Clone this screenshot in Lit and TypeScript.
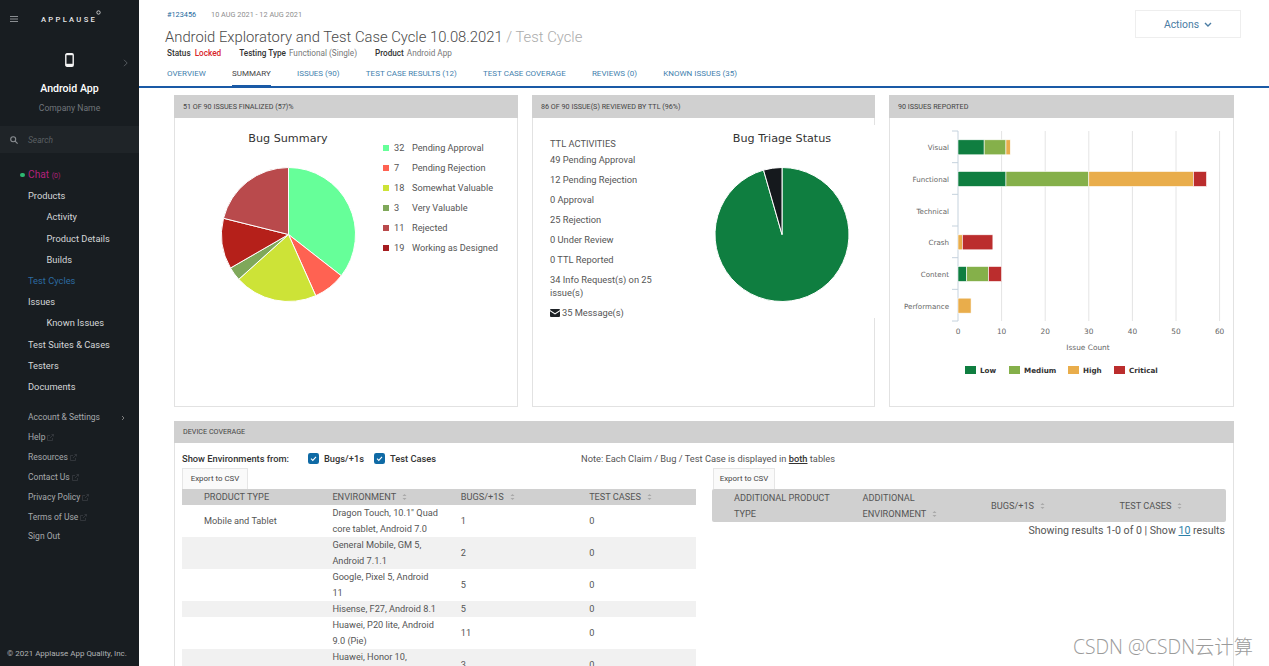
import { LitElement, html, css, svg } from "lit";
import { customElement } from "lit/decorators.js";

const polar = (cx: number, cy: number, r: number, deg: number) => {
  const a = ((deg - 90) * Math.PI) / 180;
  return [cx + r * Math.cos(a), cy + r * Math.sin(a)];
};

function pie(cx: number, cy: number, r: number, slices: { v: number; c: string }[]) {
  const total = slices.reduce((s, x) => s + x.v, 0);
  let start = 0;
  return slices.map((s) => {
    const end = start + (s.v / total) * 360;
    const [x1, y1] = polar(cx, cy, r, start);
    const [x2, y2] = polar(cx, cy, r, end);
    const large = end - start > 180 ? 1 : 0;
    start = end;
    return svg`<path d="M${cx} ${cy}L${x1} ${y1}A${r} ${r} 0 ${large} 1 ${x2} ${y2}Z" fill=${s.c} stroke="#fff" stroke-width="1" stroke-linejoin="round"/>`;
  });
}

const LEGEND = [
  { n: 32, l: "Pending Approval", c: "#66ff99" },
  { n: 7, l: "Pending Rejection", c: "#ff6252" },
  { n: 18, l: "Somewhat Valuable", c: "#cde337" },
  { n: 3, l: "Very Valuable", c: "#7fa85a" },
  { n: 11, l: "Rejected", c: "#b94a4c" },
  { n: 19, l: "Working as Designed", c: "#a51d20" },
];
const PIE1 = [
  { v: 32, c: "#66ff99" },
  { v: 7, c: "#ff6252" },
  { v: 18, c: "#cde337" },
  { v: 3, c: "#7fa85a" },
  { v: 11, c: "#b5201a" },
  { v: 19, c: "#b94a4c" },
];
const PIE2 = [
  { v: 86, c: "#0f7e40" },
  { v: 4, c: "#15191d" },
];
const SEV = { low: "#0f7e40", med: "#85b04a", high: "#e9ad4b", crit: "#bb2d2d" };
const BARS: { name: string; parts: [number, string][] }[] = [
  { name: "Visual", parts: [[6, SEV.low], [5, SEV.med], [1, SEV.high]] },
  { name: "Functional", parts: [[11, SEV.low], [19, SEV.med], [24, SEV.high], [3, SEV.crit]] },
  { name: "Technical", parts: [] },
  { name: "Crash", parts: [[1, SEV.high], [7, SEV.crit]] },
  { name: "Content", parts: [[2, SEV.low], [5, SEV.med], [3, SEV.crit]] },
  { name: "Performance", parts: [[3, SEV.high]] },
];
const ROWS = [
  ["Mobile and Tablet", "Dragon Touch, 10.1\" Quad core tablet, Android 7.0", "1", "0"],
  ["", "General Mobile, GM 5, Android 7.1.1", "2", "0"],
  ["", "Google, Pixel 5, Android 11", "5", "0"],
  ["", "Hisense, F27, Android 8.1", "5", "0"],
  ["", "Huawei, P20 lite, Android 9.0 (Pie)", "11", "0"],
  ["", "Huawei, Honor 10, Android 9.0 (Pie)", "3", "0"],
];

const sortIcon = html`<svg class="sort" width="5" height="8" viewBox="0 0 5 8"><path d="M2.5 1L4.5 3H.5zM2.5 7L.5 5h4z" fill="#a9a9a9"/></svg>`;
const extIcon = html`<svg class="ext" width="7" height="7" viewBox="0 0 7 7" fill="none" stroke="#3c4145" stroke-width=".7"><path d="M5.5 4v2.5h-5v-5H3M3 4l3.5-3.5M4.5.5h2v2"/></svg>`;

@customElement("app-root")
export class AppRoot extends LitElement {
  static styles = css`
    :host { display: block; height: 666px; overflow: hidden; font-family: Roboto, "Liberation Sans", sans-serif; color: #444; background: #fff; position: relative; }
    .app { display: flex; height: 666px; }
    .side { width: 139px; flex: none; background: #181d21; display: flex; flex-direction: column; color: #d8d8d8; }
    .brand { height: 126px; display: flex; flex-direction: column; position: relative; }
    .topline { display: flex; align-items: center; height: 38px; padding-left: 10px; }
    .logo { margin-left: 23px; font-size: 7.6px; font-weight: 500; letter-spacing: 2.3px; color: #e8e8e8; display: flex; }
    .logo svg { margin: -5px 0 0 -1px; }
    .phone { margin: 15px auto 0; display: block; }
    .chev { position: absolute; left: 123px; top: 59px; }
    .appname { text-align: center; font-size: 10.6px; font-weight: 500; color: #fff; margin-top: 15px; line-height: 14px; }
    .company { text-align: center; font-size: 8.6px; color: #70757a; margin-top: 5.5px; line-height: 12px; }
    .search { height: 27px; background: #1f2428; display: flex; align-items: center; padding-left: 10px; gap: 10px; font-size: 8.4px; font-style: italic; color: #5b6064; }
    .nav { padding-top: 11px; }
    .item { height: 21.2px; line-height: 21.2px; padding-left: 28px; font-size: 9.3px; color: #d4d6d8; white-space: nowrap; }
    .item.sub { padding-left: 46.5px; }
    .chat { color: #b5217c; font-size: 10.2px; position: relative; }
    .chat small { font-size: 7px; }
    .dot { position: absolute; left: 20px; top: 8.5px; width: 4.5px; height: 4.5px; border-radius: 50%; background: #2eb872; }
    .link { color: #2c6aa0; }
    .nav2 { margin-top: 11px; }
    .item2 { height: 19.9px; line-height: 19.9px; padding-left: 28px; font-size: 8.5px; color: #a6a9ac; display: flex; align-items: center; gap: 2px; position: relative; white-space: nowrap; }
    .item2 .arrow { position: absolute; left: 121px; top: 7px; }
    .copy { margin-top: auto; padding: 0 0 7px 7px; font-size: 7.97px; line-height: 10px; color: #b0b2b4; white-space: nowrap; }

    .main { flex: 1; min-width: 0; display: flex; flex-direction: column; }
    .head { height: 88px; flex: none; border-bottom: 2px solid #1a5aa6; box-sizing: border-box; padding: 10px 28px 0 28px; position: relative; }
    .crumbs { display: flex; gap: 15px; font-size: 7.3px; line-height: 10px; color: #8d8d8d; }
    .crumbs b { font-weight: 400; color: #1c6a9e; }
    h1 { margin: 6.5px 0 0 -2px; font-size: 14.8px; font-weight: 300; line-height: 20px; color: #4a4a4a; white-space: nowrap; }
    h1 span { color: #ababab; }
    .meta { display: flex; gap: 18px; margin-top: 1.5px; font-size: 8.2px; line-height: 11px; color: #777; }
    .meta b { font-weight: 500; color: #333; margin-right: 1px; }
    .meta .red { color: #d8232a; font-weight: 500; margin-left: 1px; }
    .tabs { display: flex; gap: 26.2px; margin-top: 7px; font-size: 8px; color: #3f7fae; }
    .tab { padding: 3px 0 6px; line-height: 10px; white-space: nowrap; }
    .tab.on { color: #444; border-bottom: 2px solid #1a5aa6; }
    .actions { position: absolute; right: 28px; top: 10px; width: 106px; height: 28px; box-sizing: border-box; border: 1px solid #eee; display: flex; align-items: center; justify-content: center; gap: 5px; font-size: 10.4px; color: #4a7ca3; }

    .content { flex: 1; min-height: 0; padding: 7px 35px 0; display: flex; flex-direction: column; gap: 14px; }
    .row { display: grid; grid-template-columns: 344px 343px 345px; column-gap: 14px; }
    .panel { border: 1px solid #e2e2e2; border-top: none; box-sizing: border-box; }
    .row .panel { height: 312px; display: flex; flex-direction: column; }
    .ph { height: 23px; margin: 0 -1px; background: #d0d0d0; font-size: 7.2px; line-height: 23px; padding-left: 9px; color: #444; white-space: nowrap; flex: none; }
    .pb { flex: 1; display: flex; min-height: 0; }
    .pie-svg { display: block; flex: none; }
    .legend { margin: 19.5px 0 0 8px; font-size: 9.2px; color: #555; }
    .leg { display: flex; align-items: center; height: 20px; white-space: nowrap; }
    .sw { width: 6px; height: 6px; margin-right: 5px; }
    .num { width: 18px; }
    .ttl { width: 150px; box-sizing: border-box; padding: 19px 12px 0 17px; font-size: 9.3px; color: #555; flex: none; }
    .ttl div { line-height: 13px; margin-bottom: 7px; }
    .ttl .cap { margin-bottom: 3px; }
    .mail { display: inline-block; vertical-align: -1px; margin-right: 2px; }
    .cover { position: relative; margin-right: -1px; background: #fff; height: 193px; flex: none; margin-top: 7px; }
    .dc { flex: 1; border-bottom: none; }
    .dc .ph { height: 22px; line-height: 22px; }
    .dcb { padding: 0 7px; }
    .filters { display: flex; align-items: center; height: 25px; box-sizing: border-box; padding-top: 5px; font-size: 9.3px; color: #444; }
    .filters b { font-weight: 500; color: #333; white-space: nowrap; }
    .fl { width: 126px; flex: none; }
    .ck { display: flex; align-items: center; gap: 5px; width: 66px; flex: none; }
    .note { margin-left: 141px; white-space: nowrap; color: #555; }
    .note b { text-decoration: underline; font-weight: 500; color: #333; }
    .tables { display: flex; gap: 16.5px; }
    .tw { width: 513.5px; flex: none; }
    .tw.r { width: 514px; }
    .export { display: block; width: 66px; height: 21px; box-sizing: border-box; border: 1px solid #e6e6e6; border-bottom: none; background: #fafafa; text-align: center; font-size: 7.9px; line-height: 20px; color: #444; }
    .tw.r .export { width: 62px; margin-left: 1px; }
    table { width: 100%; border-collapse: collapse; table-layout: fixed; font-size: 9.2px; color: #555; }
    th { background: #d0d0d0; font-weight: 400; text-align: left; padding: 0 0 0 22px; line-height: 16px; height: 16px; color: #555; white-space: normal; }
    td { padding: 0 0 0 22px; line-height: 16px; vertical-align: middle; }
    tbody tr:nth-child(even) td { background: #f1f1f1; }
    .sort { margin-left: 6px; vertical-align: -1px; }
    .r table { border-radius: 2px; overflow: hidden; }
    .r th { padding-top: 0.5px; padding-bottom: 0.5px; }
    .results { text-align: right; font-size: 10.6px; line-height: 18px; color: #555; margin-right: 1px; }
    .results u { color: #2c7fa8; }
    .mark { position: absolute; left: 1073px; top: 635px; font-size: 19.3px; line-height: 24px; color: #9b9b9b; font-family: "Open Sans", "Noto Sans CJK SC", sans-serif; white-space: nowrap; font-weight: 300; }
    text { font-family: "DejaVu Sans", sans-serif; }
  `;

  barChart() {
    const x0 = 68, sc = 4.36, top = 13, step = 31.67;
    return html`<svg width="343" height="288" viewBox="0 0 343 288">
      ${[10, 20, 30, 40, 50, 60].map((v) => svg`<line x1=${x0 + v * sc} x2=${x0 + v * sc} y1=${top} y2=${top + 190} stroke="#e4e4e4"/>`)}
      <line x1=${x0} x2=${x0} y1=${top} y2=${top + 190} stroke="#c5d2dd"/>
      ${[0, 1, 2, 3, 4, 5, 6].map((i) => svg`<line x1=${x0 - 6} x2=${x0} y1=${top + i * step} y2=${top + i * step} stroke="#c5d2dd"/>`)}
      ${BARS.map((b, i) => {
        let acc = 0;
        const y = top + i * step + 8.8;
        return svg`<text x=${x0 - 9} y=${y + 10.5} text-anchor="end" font-size="7.1" fill="#666">${b.name}</text>
        ${b.parts.map(([v, c]) => {
          const r = svg`<rect x=${x0 + acc * sc} y=${y} width=${v * sc} height="15" fill=${c} stroke="#fff" stroke-width=".6"/>`;
          acc += v;
          return r;
        })}`;
      })}
      ${[0, 10, 20, 30, 40, 50, 60].map((v) => svg`<text x=${x0 + v * sc} y="216" text-anchor="middle" font-size="7.4" fill="#666">${v}</text>`)}
      <text x=${x0 + 130} y="232" text-anchor="middle" font-size="7.4" fill="#666">Issue Count</text>
      ${[
        [75, "Low", SEV.low],
        [119, "Medium", SEV.med],
        [178, "High", SEV.high],
        [224, "Critical", SEV.crit],
      ].map(([x, l, c]) => svg`<rect x=${x} y="248" width="11" height="8" fill=${c as string}/>
        <text x=${(x as number) + 15} y="255" font-size="7.2" font-weight="700" fill="#333">${l}</text>`)}
    </svg>`;
  }

  render() {
    const check = (label: string) => html`<span class="ck"><svg width="11" height="11" viewBox="0 0 11 11"><rect width="11" height="11" rx="2.2" fill="#0f6aa5"/><path d="M3 5.6l1.8 1.8L8 3.9" fill="none" stroke="#fff" stroke-width="1.1"/></svg><b>${label}</b></span>`;
    return html`<div class="app">
      <aside class="side">
        <div class="brand">
          <div class="topline">
            <svg width="8" height="6" viewBox="0 0 8 6" stroke="#8a8e92" stroke-width="1"><path d="M0 .5h8M0 3h8M0 5.500h8"/></svg>
            <span class="logo">APPLAUSE<svg width="5" height="5" viewBox="0 0 5 5"><circle cx="2.500" cy="2.500" r="1.700" fill="none" stroke="#e8e8e8" stroke-width=".8"/></svg></span>
          </div>
          <svg class="phone" width="9" height="14" viewBox="0 0 9 14"><rect x=".8" y=".8" width="7.400" height="12.400" rx="1.200" fill="none" stroke="#f4f4f4" stroke-width="1.400"/><rect x="1" y="10.800" width="7" height="2.200" fill="#f4f4f4"/><rect x="1" y="1" width="7" height="1.200" fill="#f4f4f4"/></svg>
          <svg class="chev" width="5" height="8" viewBox="0 0 5 8" fill="none" stroke="#565b5f" stroke-width="1"><path d="M1 .8L4.200 4 1 7.200"/></svg>
          <div class="appname">Android App</div>
          <div class="company">Company Name</div>
        </div>
        <div class="search">
          <svg width="8" height="8" viewBox="0 0 8 8" fill="none" stroke="#8a8e92" stroke-width="1.100"><circle cx="3.200" cy="3.200" r="2.500"/><path d="M5.100 5.100L7.600 7.600"/></svg>
          <span>Search</span>
        </div>
        <nav class="nav">
          <div class="item chat"><span class="dot"></span>Chat <small>(0)</small></div>
          <div class="item">Products</div>
          <div class="item sub">Activity</div>
          <div class="item sub">Product Details</div>
          <div class="item sub">Builds</div>
          <div class="item link">Test Cycles</div>
          <div class="item">Issues</div>
          <div class="item sub">Known Issues</div>
          <div class="item">Test Suites &amp; Cases</div>
          <div class="item">Testers</div>
          <div class="item">Documents</div>
        </nav>
        <nav class="nav2">
          <div class="item2">Account &amp; Settings<svg class="arrow" width="4" height="6" viewBox="0 0 4 6" fill="none" stroke="#888" stroke-width=".9"><path d="M1 1l2 2-2 2"/></svg></div>
          <div class="item2">Help ${extIcon}</div>
          <div class="item2">Resources ${extIcon}</div>
          <div class="item2">Contact Us ${extIcon}</div>
          <div class="item2">Privacy Policy ${extIcon}</div>
          <div class="item2">Terms of Use ${extIcon}</div>
          <div class="item2">Sign Out</div>
        </nav>
        <div class="copy">© 2021 Applause App Quality, Inc.</div>
      </aside>
      <main class="main">
        <header class="head">
          <div class="crumbs"><b>#123456</b><span>10 AUG 2021 - 12 AUG 2021</span></div>
          <h1>Android Exploratory and Test Case Cycle 10.08.2021 <span>/ Test Cycle</span></h1>
          <div class="meta">
            <span><b>Status</b> <span class="red">Locked</span></span>
            <span><b>Testing Type</b> Functional (Single)</span>
            <span><b>Product</b> Android App</span>
          </div>
          <div class="tabs">
            <span class="tab">OVERVIEW</span>
            <span class="tab on">SUMMARY</span>
            <span class="tab">ISSUES (90)</span>
            <span class="tab">TEST CASE RESULTS (12)</span>
            <span class="tab">TEST CASE COVERAGE</span>
            <span class="tab">REVIEWS (0)</span>
            <span class="tab">KNOWN ISSUES (35)</span>
          </div>
          <div class="actions">Actions <svg width="8" height="5" viewBox="0 0 8 5" fill="none" stroke="#4a7ca3" stroke-width="1.400"><path d="M1 1l3 3 3-3"/></svg></div>
        </header>
        <div class="content">
          <div class="row">
            <section class="panel">
              <div class="ph">51 OF 90 ISSUES FINALIZED (57)%</div>
              <div class="pb">
                <svg class="pie-svg" width="200" height="200" viewBox="0 0 200 200">
                  <text x="113" y="24" text-anchor="middle" font-size="11.200" fill="#333">Bug Summary</text>
                  ${pie(113.5, 116.5, 67, PIE1)}
                </svg>
                <div class="legend">
                  ${LEGEND.map((l) => html`<div class="leg"><span class="sw" style="background:${l.c}"></span><span class="num">${l.n}</span><span>${l.l}</span></div>`)}
                </div>
              </div>
            </section>
            <section class="panel">
              <div class="ph">86 OF 90 ISSUE(S) REVIEWED BY TTL (96%)</div>
              <div class="pb">
                <div class="ttl">
                  <div class="cap">TTL ACTIVITIES</div>
                  <div>49 Pending Approval</div>
                  <div>12 Pending Rejection</div>
                  <div>0 Approval</div>
                  <div>25 Rejection</div>
                  <div>0 Under Review</div>
                  <div>0 TTL Reported</div>
                  <div>34 Info Request(s) on 25 issue(s)</div>
                  <div><svg class="mail" width="10" height="8" viewBox="0 0 10 8"><path d="M0 1a1 1 0 011-1h8a1 1 0 011 1L5 4.300zM0 2.300l5 3.200 5-3.200V7a1 1 0 01-1 1H1a1 1 0 01-1-1z" fill="#1e2226"/></svg>35 Message(s)</div>
                </div>
                <svg class="cover pie-svg" width="193" height="193" viewBox="0 0 193 193">
                  <text x="99" y="17" text-anchor="middle" font-size="11.200" fill="#333">Bug Triage Status</text>
                  ${pie(99, 109.5, 67, PIE2)}
                </svg>
              </div>
            </section>
            <section class="panel">
              <div class="ph">90 ISSUES REPORTED</div>
              <div class="pb">${this.barChart()}</div>
            </section>
          </div>
          <section class="panel dc">
            <div class="ph">DEVICE COVERAGE</div>
            <div class="dcb">
              <div class="filters">
                <b class="fl">Show Environments from:</b>
                ${check("Bugs/+1s")}${check("Test Cases")}
                <span class="note">Note: Each Claim / Bug / Test Case is displayed in <b>both</b> tables</span>
              </div>
              <div class="tables">
                <div class="tw">
                  <span class="export">Export to CSV</span>
                  <table>
                    <thead><tr><th>PRODUCT TYPE</th><th>ENVIRONMENT${sortIcon}</th><th>BUGS/+1S${sortIcon}</th><th>TEST CASES${sortIcon}</th></tr></thead>
                    <tbody>
                      ${ROWS.map((r) => html`<tr>${r.map((c) => html`<td>${c}</td>`)}</tr>`)}
                    </tbody>
                  </table>
                </div>
                <div class="tw r">
                  <span class="export">Export to CSV</span>
                  <table>
                    <thead><tr><th>ADDITIONAL PRODUCT TYPE</th><th>ADDITIONAL ENVIRONMENT${sortIcon}</th><th>BUGS/+1S${sortIcon}</th><th>TEST CASES${sortIcon}</th></tr></thead>
                  </table>
                  <div class="results">Showing results 1-0 of 0 | Show <u>10</u> results</div>
                </div>
              </div>
            </div>
          </section>
        </div>
      </main>
      <div class="mark">CSDN @CSDN云计算</div>
    </div>`;
  }
}
